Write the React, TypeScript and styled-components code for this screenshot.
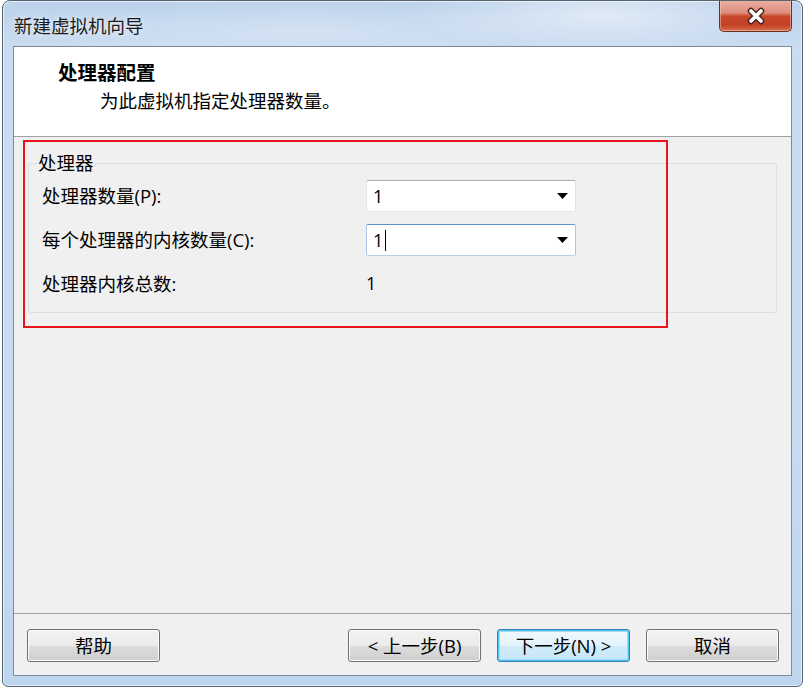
import React from "react";
import styled, { createGlobalStyle } from "styled-components";

const FONT = `"Open Sans", "Noto Sans CJK SC", "Noto Sans", sans-serif`;

const Global = createGlobalStyle`
  html, body { margin: 0; padding: 0; background: #ffffff; }
  body { font-family: ${FONT}; color: #000; }
  * { box-sizing: border-box; }
`;

const Window = styled.div`
  margin-left: 2px;
  width: 801px;
  height: 687px;
  border: 1px solid #56646f;
  border-radius: 8px 8px 6px 6px;
  background:
    radial-gradient(ellipse 200px 36px at 600px 14px, rgba(255, 255, 255, 0.5), rgba(255, 255, 255, 0) 100%),
    radial-gradient(ellipse 260px 30px at 300px 30px, rgba(255, 255, 255, 0.25), rgba(255, 255, 255, 0) 100%),
    linear-gradient(180deg, #bcd2eb 0px, #c9dcf1 46px, #c8dcf2 60%, #bed5ef 100%);
  box-shadow: inset 0 0 0 1px rgba(255, 255, 255, 0.6);
  display: flex;
  flex-direction: column;
  padding: 0 10px 10px 10px;
  overflow: hidden;
  font-family: ${FONT};
`;

const TitleBar = styled.div`
  height: 45px;
  flex: none;
  display: flex;
  align-items: flex-start;
  justify-content: space-between;
`;

const TitleText = styled.div`
  margin-top: 13px;
  padding-left: 1px;
  font-size: 18.5px;
  line-height: 24px;
  color: #1b1b1b;
  text-shadow: 0 0 6px rgba(255, 255, 255, 0.9);
`;

const CloseButton = styled.div`
  width: 73px;
  height: 32px;
  margin-top: -1px;
  border: 1px solid #6e2e22;
  border-top: none;
  border-radius: 0 0 5px 5px;
  background: linear-gradient(
    180deg,
    #eab0a3 0%,
    #de8d7a 42%,
    #c9492e 52%,
    #c43f24 80%,
    #d5704c 100%
  );
  box-shadow: inset 0 0 0 1px rgba(255, 220, 210, 0.45);
  display: flex;
  align-items: center;
  justify-content: center;
`;

const Client = styled.div`
  flex: 1;
  border: 1px solid #7f8b98;
  background: #f0f0f0;
  display: flex;
  flex-direction: column;
  min-height: 0;
`;

const Header = styled.div`
  height: 90px;
  flex: none;
  background: #ffffff;
  border-bottom: 1px solid #a0a0a0;
  padding-top: 14px;
`;

const HeaderTitle = styled.div`
  padding-left: 44px;
  font-size: 19.5px;
  font-weight: 700;
  line-height: 24px;
`;

const HeaderSub = styled.div`
  margin-top: 4px;
  padding-left: 86px;
  font-size: 18.5px;
  line-height: 24px;
`;

const Body = styled.div`
  flex: 1;
  position: relative;
  padding: 14px 14px 0 14px;
`;

const Highlight = styled.div`
  position: absolute;
  top: 3px;
  left: 9px;
  width: 645px;
  height: 188px;
  border: 2px solid #e8131b;
  pointer-events: none;
`;

const Group = styled.fieldset`
  margin: 0;
  min-width: 0;
  padding: 5px 0 12px 0;
  border: 1px solid #d5dfe5;
  border-radius: 3px;
`;

const Legend = styled.legend`
  margin-left: 8px;
  padding: 0 1px;
  font-size: 18.5px;
  line-height: 24px;
`;

const Rows = styled.div`
  display: grid;
  grid-template-columns: 324px 210px;
  grid-auto-rows: 32px;
  row-gap: 12px;
  align-items: center;
  padding-left: 13px;
`;

const Label = styled.div`
  font-size: 18.5px;
  line-height: 24px;
  white-space: nowrap;
`;

const Value = styled.div`
  font-size: 18px;
  line-height: 24px;
  margin-top: -2px;
`;

const Combo = styled.div<{ $focused?: boolean }>`
  height: 32px;
  width: 210px;
  background: #ffffff;
  border: 1px solid;
  border-radius: 2px;
  border-color: ${(p) =>
    p.$focused
      ? "#5d95c8 #a7c8e8 #b7d3ee #a7c8e8"
      : "#abadb3 #dbdfe6 #e3e9ef #e2e3ea"};
  display: flex;
  align-items: center;
  justify-content: space-between;
  padding: 0 7px 0 6px;
`;

const ComboText = styled.div`
  display: flex;
  align-items: center;
  font-size: 18px;
  line-height: 24px;
`;

const Caret = styled.span`
  display: inline-block;
  width: 1px;
  height: 21px;
  margin-left: 2px;
  background: #000;
`;

const Footer = styled.div`
  height: 62px;
  flex: none;
  border-top: 1px solid #a0a0a0;
  display: flex;
  align-items: flex-start;
  padding: 15px 12px 0 13px;
`;

const NavGroup = styled.div`
  margin-left: auto;
  display: flex;
  gap: 16px;
`;

const Button = styled.div<{ $default?: boolean }>`
  width: 133px;
  height: 33px;
  border: 1px solid ${(p) => (p.$default ? "#3c7fb1" : "#707070")};
  border-radius: 3px;
  background: ${(p) =>
    p.$default
      ? "linear-gradient(180deg, #f1f9fe 0%, #e3f3fc 50%, #d0ecfb 51%, #c6e6f8 100%)"
      : "linear-gradient(180deg, #f2f2f2 0%, #ebebeb 50%, #dddddd 51%, #cfcfcf 100%)"};
  box-shadow: ${(p) =>
    p.$default
      ? "inset 0 0 0 1px #4fc3ef, inset 0 0 0 2px #9edcf6"
      : "inset 0 0 0 1px #fbfbfb"};
  display: flex;
  align-items: center;
  justify-content: center;
  font-size: 18.5px;
  line-height: 24px;
  white-space: nowrap;
`;

function CloseX() {
  return (
    <svg width="22" height="18" viewBox="0 0 22 18">
      <path
        d="M6 4 L16 14 M16 4 L6 14"
        stroke="#4b2119"
        strokeWidth="6.6"
        strokeLinecap="round"
        fill="none"
      />
      <path
        d="M6 4 L16 14 M16 4 L6 14"
        stroke="#ffffff"
        strokeWidth="3.8"
        strokeLinecap="round"
        fill="none"
      />
    </svg>
  );
}

function Arrow() {
  return (
    <svg width="11" height="6" viewBox="0 0 11 6">
      <polygon points="0,0 11,0 5.5,6" fill="#000" />
    </svg>
  );
}

export default function App() {
  return (
    <>
      <Global />
      <Window>
        <TitleBar>
          <TitleText>新建虚拟机向导</TitleText>
          <CloseButton>
            <CloseX />
          </CloseButton>
        </TitleBar>
        <Client>
          <Header>
            <HeaderTitle>处理器配置</HeaderTitle>
            <HeaderSub>为此虚拟机指定处理器数量。</HeaderSub>
          </Header>
          <Body>
            <Group>
              <Legend>处理器</Legend>
              <Rows>
                <Label>处理器数量(P):</Label>
                <Combo>
                  <ComboText>1</ComboText>
                  <Arrow />
                </Combo>
                <Label>每个处理器的内核数量(C):</Label>
                <Combo $focused>
                  <ComboText>
                    1<Caret />
                  </ComboText>
                  <Arrow />
                </Combo>
                <Label>处理器内核总数:</Label>
                <Value>1</Value>
              </Rows>
            </Group>
            <Highlight />
          </Body>
          <Footer>
            <Button>帮助</Button>
            <NavGroup>
              <Button>&lt; 上一步(B)</Button>
              <Button $default>下一步(N) &gt;</Button>
              <Button>取消</Button>
            </NavGroup>
          </Footer>
        </Client>
      </Window>
    </>
  );
}
